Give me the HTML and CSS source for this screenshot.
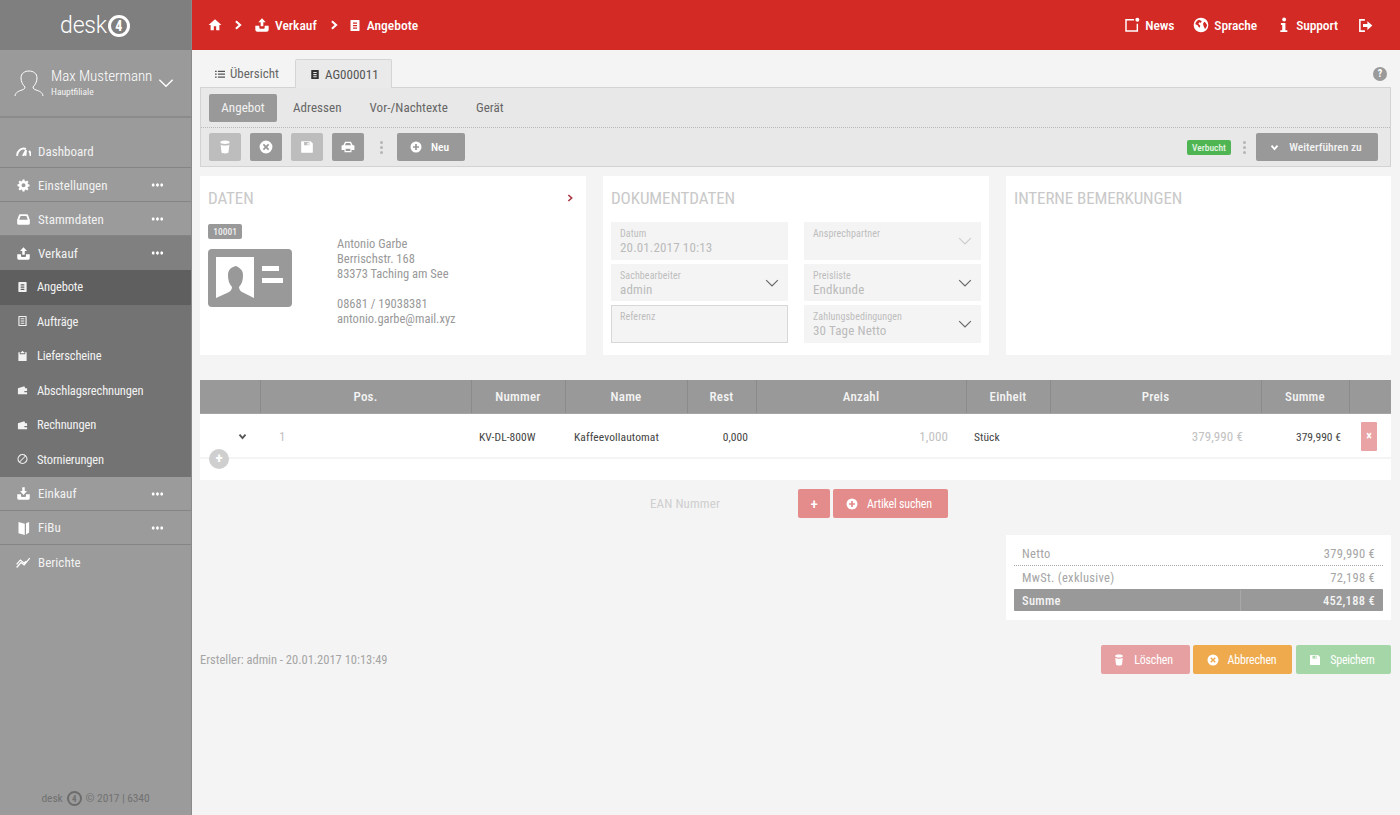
FILE: index.html
```html
<!DOCTYPE html>
<html lang="de">
<head>
<meta charset="utf-8">
<title>desk4 Angebote</title>
<link rel="stylesheet" href="styles.css">
</head>
<body>
<svg class="defs" width="0" height="0">
  <symbol id="i-upload" viewBox="0 0 24 24"><path d="M12 2l5.500 6H14v6h-4V8H6.500zM2 13h6v3a1.500 1.500 0 0 0 1.500 1.500h5A1.500 1.500 0 0 0 16 16v-3h6v6a3 3 0 0 1-3 3H5a3 3 0 0 1-3-3z"/></symbol>
  <symbol id="i-download" viewBox="0 0 24 24"><path d="M10 2h4v6h3.500L12 14.500 6.500 8H10zM2 13h6v3a1.500 1.500 0 0 0 1.500 1.500h5A1.500 1.500 0 0 0 16 16v-3h6v6a3 3 0 0 1-3 3H5a3 3 0 0 1-3-3z"/></symbol>
  <symbol id="i-doc" viewBox="0 0 24 24"><path fill-rule="evenodd" d="M4 1h16a1 1 0 0 1 1 1v20a1 1 0 0 1-1 1H4a1 1 0 0 1-1-1V2a1 1 0 0 1 1-1zm4 5v2.500h8V6zm0 5v2.500h8V11zm0 5v2.500h8V16z"/></symbol>
  <symbol id="i-trash" viewBox="0 0 24 24"><path d="M12 1c5 0 8 1.300 8 3s-3 3-8 3-8-1.300-8-3 3-3 8-3zM4.500 8c2 1 4.700 1.400 7.500 1.400s5.500-.4 7.500-1.400L18 21c-.2 1.400-3 2-6 2s-5.800-.6-6-2z"/></symbol>
  <symbol id="i-cancel" viewBox="0 0 24 24"><path fill-rule="evenodd" d="M12 1a11 11 0 1 1 0 22 11 11 0 0 1 0-22zM8.600 6.500L6.500 8.600 9.900 12l-3.400 3.400 2.100 2.100 3.400-3.400 3.400 3.400 2.100-2.100-3.400-3.400 3.400-3.400-2.100-2.100-3.400 3.400z"/></symbol>
  <symbol id="i-save" viewBox="0 0 24 24"><path fill-rule="evenodd" d="M3 2h15l4 4v15a1 1 0 0 1-1 1H3a1 1 0 0 1-1-1V3a1 1 0 0 1 1-1zm4 1.500V9h9V3.500zM12.500 4.500h2.500v3.500h-2.500z"/></symbol>
  <symbol id="i-print" viewBox="0 0 24 24"><path fill-rule="evenodd" d="M7 3h10l3 6h2a1 1 0 0 1 1 1v7h-5v4H6v-4H1v-7a1 1 0 0 1 1-1h2zm1.500 2L6.800 9h10.400l-1.700-4zM8 15v4h8v-4z"/></symbol>
  <symbol id="i-plus" viewBox="0 0 24 24"><path fill-rule="evenodd" d="M12 1a11 11 0 1 1 0 22 11 11 0 0 1 0-22zm-1.700 5v4.300H6v3.400h4.300V18h3.400v-4.300H18v-3.400h-4.300V6z"/></symbol>
  <symbol id="i-wallet" viewBox="0 0 24 24"><path fill-rule="evenodd" d="M2 8l14-4 2 4h4v13H2zm14 6v3h6v-3z"/></symbol>
  <symbol id="i-chev" viewBox="0 0 24 24"><path d="M2 7l10 10L22 7" fill="none" stroke="currentColor" stroke-width="2"/></symbol>
  <symbol id="i-chev-b" viewBox="0 0 24 24"><path d="M4 7l8 9 8-9" fill="none" stroke="currentColor" stroke-width="5"/></symbol>
  <symbol id="i-right" viewBox="0 0 24 24"><path d="M7 3l10 9-10 9" fill="none" stroke="currentColor" stroke-width="5"/></symbol>
</svg>

<aside class="sidebar">
  <div class="brand">
    <span class="brand-name">desk</span><span class="brand-mark">4</span>
  </div>
  <div class="user">
    <svg class="user-icon" viewBox="0 0 30 28"><path d="M1 26c.5-4 4-5 7-6 2-.7 3-1.500 3-3-2-2-4-5-4-9 0-4.500 3.500-7 8-7s8 2.500 8 7c0 4-2 7-4 9 0 1.500 1 2.300 3 3 3 1 6.500 2 7 6" fill="none" stroke="#fff" stroke-width="1"/></svg>
    <div class="user-text">
      <div class="user-name">Max Mustermann</div>
      <div class="user-sub">Hauptfiliale</div>
    </div>
    <svg class="user-chev"><use href="#i-chev"/></svg>
  </div>
  <nav class="nav">
    <a class="nav-item"><svg class="nav-ico" viewBox="0 0 24 24"><path d="M2 19a10.500 10.500 0 0 1 14-11M21 11a10 10 0 0 1 2 8M11 19l5-9-1 9" fill="none" stroke="#fff" stroke-width="3"/></svg><span>Dashboard</span></a>
    <a class="nav-item"><svg class="nav-ico" viewBox="-3 -3 30 30"><path fill-rule="evenodd" d="M10 1h4l.6 3 2 .9L19.200 3 22 5.800l-1.900 2.600.9 2 3 .6v4l-3 .6-.9 2 1.900 2.600-2.800 2.800-2.600-1.900-2 .9-.6 3h-4l-.6-3-2-.9-2.600 1.900L2 19.800l1.900-2.600-.9-2-3-.6v-4l3-.6.9-2L2 5.800 4.800 3l2.600 1.900 2-.9zM12 8.500a4 4 0 1 0 0 8 4 4 0 0 0 0-8z" transform="translate(0 -1)"/></svg><span>Einstellungen</span><i class="more"></i></a>
    <a class="nav-item"><svg class="nav-ico" viewBox="-1 -1 26 26"><path fill-rule="evenodd" d="M6 3h12c1 0 1.700.6 2 1.500L23 13v6a2 2 0 0 1-2 2H3a2 2 0 0 1-2-2v-6l3-8.500C4.300 3.600 5 3 6 3zM4.500 12.500h15L17 6H7z"/></svg><span>Stammdaten</span><i class="more"></i></a>
    <a class="nav-item nav-open"><svg class="nav-ico"><use href="#i-upload"/></svg><span>Verkauf</span><i class="more"></i></a>
    <div class="subnav">
      <a class="sub-item sub-active"><svg class="sub-ico"><use href="#i-doc"/></svg><span>Angebote</span></a>
      <a class="sub-item"><svg class="sub-ico" viewBox="0 0 24 24"><path fill-rule="evenodd" d="M4 1h16a1 1 0 0 1 1 1v20a1 1 0 0 1-1 1H4a1 1 0 0 1-1-1V2a1 1 0 0 1 1-1zm1.500 2.500v17h13v-17zM8 6h8v2H8zm0 5h8v2H8zm0 5h8v2H8z"/></svg><span>Aufträge</span></a>
      <a class="sub-item"><svg class="sub-ico" viewBox="0 0 24 24"><path d="M8 3h2a2 2 0 0 1 4 0h2v3H8zM3 4h3v4h12V4h3v19H3z"/></svg><span>Lieferscheine</span></a>
      <a class="sub-item"><svg class="sub-ico"><use href="#i-wallet"/></svg><span>Abschlagsrechnungen</span></a>
      <a class="sub-item"><svg class="sub-ico"><use href="#i-wallet"/></svg><span>Rechnungen</span></a>
      <a class="sub-item"><svg class="sub-ico" viewBox="0 0 24 24"><path fill-rule="evenodd" d="M12 1a11 11 0 1 1 0 22 11 11 0 0 1 0-22zm5.200 4.300A8.500 8.500 0 0 0 5.300 17.200zM18.700 6.800L6.800 18.700A8.500 8.500 0 0 0 18.700 6.800z"/></svg><span>Stornierungen</span></a>
    </div>
    <a class="nav-item"><svg class="nav-ico"><use href="#i-download"/></svg><span>Einkauf</span><i class="more"></i></a>
    <a class="nav-item"><svg class="nav-ico" viewBox="0 0 24 24"><path d="M4 3l10 3v18l-10-3zM16 5l5-2v17l-5 3z"/></svg><span>FiBu</span><i class="more"></i></a>
    <a class="nav-item nav-last"><svg class="nav-ico" viewBox="0 0 24 24"><path d="M1 20l7-8 5 4 9-11M1 15l6-7 6 5 3-3" fill="none" stroke="#fff" stroke-width="2"/></svg><span>Berichte</span></a>
  </nav>
  <div class="copyright"><span>desk</span><b class="mini-mark">4</b><span>© 2017 | 6340</span></div>
</aside>

<div class="main">
  <header class="topbar">
    <svg class="crumb-home" viewBox="0 0 24 24"><path d="M10 21v-7h4v7h5.500v-9H23L12 2 1 12h3.500v9z"/></svg>
    <svg class="crumb-sep"><use href="#i-right"/></svg>
    <svg class="crumb-ico"><use href="#i-upload"/></svg>
    <span class="crumb">Verkauf</span>
    <svg class="crumb-sep crumb-sep2"><use href="#i-right"/></svg>
    <svg class="crumb-ico crumb-doc"><use href="#i-doc"/></svg>
    <span class="crumb">Angebote</span>
    <div class="top-right">
      <a class="top-link"><svg class="top-ico" viewBox="0 0 24 24"><path d="M15 4H3v17h17V10" fill="none" stroke="#fff" stroke-width="2.200"/><circle cx="20" cy="4" r="3" fill="#fff"/></svg>News</a>
      <a class="top-link"><svg class="top-ico" viewBox="0 0 24 24"><path fill-rule="evenodd" d="M12 1a11 11 0 1 1 0 22 11 11 0 0 1 0-22zM9 4C6 5 3.500 8 3.500 11l3 1 2 3 1.500 1 1-3-3-3 2-2 2 1 1-3zm8 3l-2 3 1 4 2 4c2-2 3-4 3-6-1-2-2-4-4-5z"/></svg>Sprache</a>
      <a class="top-link"><svg class="top-ico top-info" viewBox="0 0 14 24"><circle cx="8" cy="3.500" r="3"/><path d="M3 9h7v11h3v3H2v-3h3v-8H3z"/></svg>Support</a>
      <a class="top-link top-exit"><svg class="top-ico" viewBox="0 0 24 24"><path d="M11 3H3v18h8" fill="none" stroke="#fff" stroke-width="2.500"/><path d="M8 9.500h7V5l8 7-8 7v-4.500H8z"/></svg></a>
    </div>
  </header>

  <div class="content">
    <div class="tabs">
      <a class="tab"><svg class="tab-ico" viewBox="0 0 12 12"><path d="M0 2h2v1.500H0zM3.500 2H12v1.500H3.500zM0 5.500h2V7H0zM3.500 5.500H12V7H3.500zM0 9h2v1.500H0zM3.500 9H12v1.500H3.500z" fill="#555"/></svg>Übersicht</a>
      <a class="tab tab-active"><svg class="tab-ico tab-doc"><use href="#i-doc"/></svg>AG000011</a>
      <span class="help">?</span>
    </div>

    <section class="panel">
      <div class="panel-row panel-tabs">
        <a class="ptab ptab-active">Angebot</a>
        <a class="ptab">Adressen</a>
        <a class="ptab">Vor-/Nachtexte</a>
        <a class="ptab">Gerät</a>
      </div>
      <div class="panel-row panel-tools">
        <button class="tool tool-off"><svg><use href="#i-trash"/></svg></button>
        <button class="tool"><svg><use href="#i-cancel"/></svg></button>
        <button class="tool tool-off"><svg><use href="#i-save"/></svg></button>
        <button class="tool"><svg><use href="#i-print"/></svg></button>
        <span class="vdots"><i></i><i></i><i></i></span>
        <button class="tool tool-text"><svg><use href="#i-plus"/></svg>Neu</button>
        <span class="spacer"></span>
        <span class="badge-green">Verbucht</span>
        <span class="vdots vdots-r"><i></i><i></i><i></i></span>
        <button class="tool tool-next"><svg><use href="#i-chev-b"/></svg>Weiterführen zu</button>
      </div>
    </section>

    <div class="cards">
      <section class="card">
        <div class="card-head"><h2>DATEN</h2><svg class="card-arrow"><use href="#i-right"/></svg></div>
        <div class="person">
          <div class="person-left">
            <span class="badge-grey">10001</span>
            <svg class="idcard" viewBox="0 0 84 58"><rect width="84" height="58" rx="4" fill="#999"/><path d="M8 8h38v41l-10-5c-3-1-5-3-5-6 3-3 4-7 4-12 0-5-3-7-7-9-5 1-8 4-8 9 0 5 1 9 4 12 0 3-2 5-5 6l-11 5z" fill="#fff"/><rect x="54" y="17" width="17" height="5" fill="#fff"/><rect x="54" y="29" width="21" height="5" fill="#fff"/></svg>
          </div>
          <div class="person-info">
            <p>Antonio Garbe<br>Berrischstr. 168<br>83373 Taching am See</p>
            <p>08681 / 19038381<br>antonio.garbe@mail.xyz</p>
          </div>
        </div>
      </section>
      <section class="card">
        <div class="card-head"><h2>DOKUMENTDATEN</h2></div>
        <div class="fields">
          <div class="field"><label>Datum</label><div>20.01.2017 10:13</div></div>
          <div class="field field-sel field-faint"><label>Ansprechpartner</label><div>&nbsp;</div><svg><use href="#i-chev"/></svg></div>
          <div class="field field-sel"><label>Sachbearbeiter</label><div>admin</div><svg><use href="#i-chev"/></svg></div>
          <div class="field field-sel"><label>Preisliste</label><div>Endkunde</div><svg><use href="#i-chev"/></svg></div>
          <div class="field field-box"><label>Referenz</label><div>&nbsp;</div></div>
          <div class="field field-sel"><label>Zahlungsbedingungen</label><div>30 Tage Netto</div><svg><use href="#i-chev"/></svg></div>
        </div>
      </section>
      <section class="card">
        <div class="card-head"><h2>INTERNE BEMERKUNGEN</h2></div>
      </section>
    </div>

    <section class="table-wrap">
      <table class="items">
        <colgroup><col class="c1"><col class="c2"><col class="c3"><col class="c4"><col class="c5"><col class="c6"><col class="c7"><col class="c8"><col class="c9"><col class="c10"></colgroup>
        <thead>
          <tr><th></th><th>Pos.</th><th>Nummer</th><th>Name</th><th>Rest</th><th>Anzahl</th><th>Einheit</th><th>Preis</th><th>Summe</th><th></th></tr>
        </thead>
        <tbody>
          <tr>
            <td class="t-chev"><svg><use href="#i-chev-b"/></svg></td>
            <td class="t-faint t-pos">1</td>
            <td>KV-DL-800W</td>
            <td class="t-name">Kaffeevollautomat</td>
            <td class="t-right">0,000</td>
            <td class="t-right t-faint t-price">1,000</td>
            <td>Stück</td>
            <td class="t-right t-faint t-price">379,990 €</td>
            <td class="t-right">379,990 €</td>
            <td class="t-del"><span class="del">×</span></td>
          </tr>
        </tbody>
      </table>
      <div class="table-foot"><span class="add-row">+</span></div>
    </section>

    <div class="ean-row">
      <span class="ean-label">EAN Nummer</span>
      <button class="btn btn-pink btn-square">+</button>
      <button class="btn btn-pink btn-search"><svg><use href="#i-plus"/></svg>Artikel suchen</button>
    </div>

    <div class="totals-row">
      <section class="totals">
        <div class="tot tot-dotted"><span>Netto</span><span>379,990 €</span></div>
        <div class="tot tot-mid"><span>MwSt. (exklusive)</span><span>72,198 €</span></div>
        <div class="tot tot-sum"><span class="sum-l">Summe</span><span class="sum-r">452,188 €</span></div>
      </section>
    </div>

    <div class="actions">
      <span class="creator">Ersteller: admin - 20.01.2017 10:13:49</span>
      <button class="btn btn-red"><svg><use href="#i-trash"/></svg>Löschen</button>
      <button class="btn btn-orange"><svg><use href="#i-cancel"/></svg>Abbrechen</button>
      <button class="btn btn-green"><svg><use href="#i-save"/></svg>Speichern</button>
    </div>
  </div>
</div>
</body>
</html>
```

FILE: styles.css
```css
* { box-sizing: border-box; }
html, body { margin: 0; height: 100%; }
body {
  display: flex;
  width: 1400px;
  height: 815px;
  overflow: hidden;
  font-family: Roboto, "Liberation Sans", sans-serif;
  font-stretch: 85%;
  font-size: 12px;
  color: #555;
  background: #f4f4f4;
}
.defs { position: absolute; }
svg { fill: currentColor; }
button { font-family: inherit; font-stretch: inherit; border: 0; padding: 0; cursor: pointer; }

/* sidebar */
.sidebar {
  width: 192px;
  flex: none;
  display: flex;
  flex-direction: column;
  background: #9b9b9b;
  border-right: 1px solid #8a8a8a;
  color: #f4f4f4;
}
.brand {
  height: 50px;
  background: #7f7f7f;
  display: flex;
  align-items: center;
  justify-content: center;
  padding-right: 1px;
}
.brand-name { font-size: 23px; font-weight: 300; font-stretch: 100%; color: #fff; letter-spacing: -.2px; }
.brand-mark {
  width: 22px;
  height: 22px;
  margin: 1px 0 0 1px;
  border-radius: 50%;
  border: 3px solid #fff;
  display: flex;
  align-items: center;
  justify-content: center;
  font-size: 14px;
  font-weight: 700;
  color: #fff;
}
.user {
  height: 68px;
  display: flex;
  align-items: center;
  padding-left: 14px;
  border-bottom: 2px solid #8b8b8b;
  background: #9a9a9a;
}
.user-icon { width: 30px; height: 28px; margin: 2px 7px 0 0; flex: none; }
.user-text { flex: none; width: 108px; }
.user-name { font-size: 15px; font-weight: 300; color: #fff; line-height: 17px; letter-spacing: -.05px; white-space: nowrap; }
.user-sub { font-size: 9.500px; line-height: 13px; color: #f4f4f4; }
.user-chev { width: 16px; height: 16px; color: #fff; margin-left: -1px; }
.nav { padding-top: 16px; display: flex; flex-direction: column; }
.nav-item {
  height: 34px;
  display: flex;
  align-items: center;
  padding-left: 16px;
  padding-top: 1px;
  font-size: 13px;
  letter-spacing: .05px;
  color: #f2f2f2;
  border-bottom: 1px solid #858585;
  position: relative;
}
.subnav ~ .nav-item { padding-top: 0; }
.subnav ~ .nav-last { padding-top: 1px; border-bottom: 0; }
.nav-open { background: #808080; border-bottom: 0; }
.nav-ico { width: 15px; height: 15px; margin-right: 7px; flex: none; color: #fff; fill: #fff; }
.more {
  position: absolute;
  left: 151px;
  top: 15px;
  width: 13px;
  height: 4px;
  background: radial-gradient(circle, #fff 1.400px, transparent 1.800px) 0 0 / 4.300px 4px repeat-x;
}
.subnav { display: flex; flex-direction: column; background: #737373; height: 207px; }
.sub-item {
  height: 34.500px;
  display: flex;
  align-items: center;
  padding-left: 17px;
  padding-bottom: 1px;
  font-size: 12.500px;
  letter-spacing: -.15px;
  color: #f2f2f2;
}
.sub-active { background: #5f5f5f; }
.sub-ico { width: 11px; height: 12px; margin-right: 9px; flex: none; fill: #f2f2f2; }
.copyright {
  margin-top: auto;
  height: 24px;
  display: flex;
  align-items: flex-start;
  justify-content: center;
  gap: 4px;
  font-size: 11.500px;
  color: #717171;
  letter-spacing: -.1px;
}
.mini-mark {
  width: 15px;
  height: 15px;
  border-radius: 50%;
  border: 2px solid #6c6c6c;
  font-size: 9px;
  display: flex;
  align-items: center;
  justify-content: center;
}

/* main */
.main { flex: 1; display: flex; flex-direction: column; min-width: 0; }
.topbar {
  height: 50px;
  flex: none;
  background: #d32a26;
  color: #fff;
  display: flex;
  align-items: center;
  padding: 0 27px 0 16px;
  font-size: 13.500px;
  font-weight: 500;
}
.crumb-home { width: 14px; height: 14px; fill: #fff; margin-right: 11px; }
.crumb-sep { width: 10px; height: 10px; color: #fff; margin-right: 11px; }
.crumb-sep2 { margin: 0 10px 0 12px; }
.crumb-ico { width: 16px; height: 16px; fill: #fff; margin-right: 5px; }
.crumb-doc { width: 12px; height: 13px; margin-right: 6px; }
.top-right { margin-left: auto; display: flex; align-items: center; gap: 19px; letter-spacing: -.1px; }
.top-link { display: flex; align-items: center; gap: 5px; }
.top-ico { width: 16px; height: 16px; fill: #fff; }
.top-info { width: 9px; margin: 0 3px 0 3px; height: 16px; }
.top-exit { margin-left: 1px; }
.top-exit .top-ico { width: 15px; height: 15px; }

.content { flex: 1; padding: 9px 9px 0 8px; }
.tabs {
  height: 28px;
  display: flex;
  align-items: flex-start;
  position: relative;
}
.tab {
  width: 95px;
  height: 28px;
  display: flex;
  align-items: center;
  padding: 1px 0 0 15px;
  font-size: 13px;
  color: #666;
}
.tab-active {
  width: 97px;
  height: 29px;
  padding: 0 0 0 14px;
  background: #eaeaea;
  border: 1px solid #d5d5d5;
  border-bottom: 0;
  border-radius: 2px 2px 0 0;
  color: #555;
  position: relative;
  z-index: 1;
}
.tab-ico { width: 10px; height: 10px; margin-right: 5px; }
.tab-doc { height: 13px; fill: #333; }
.help {
  position: absolute;
  right: 4px;
  top: 8px;
  width: 14px;
  height: 14px;
  border-radius: 50%;
  background: #9a9a9a;
  color: #fff;
  font-size: 10px;
  font-weight: 700;
  text-align: center;
  line-height: 14px;
}
.panel { height: 80px; background: #e8e8e8; border: 1px solid #d3d3d3; }
.panel-row { display: flex; align-items: center; padding: 0 12px 0 8px; }
.panel-tabs { height: 40px; border-bottom: 1px dotted #b8b8b8; }
.panel-tools { height: 38px; }
.ptab {
  height: 28px;
  display: flex;
  align-items: center;
  padding: 0 14px;
  font-size: 13px;
  letter-spacing: .05px;
  color: #666;
  border-radius: 2px;
}
.ptab-active { background: #999; color: #f2f2f2; width: 68px; padding: 0; justify-content: center; margin-right: 2px; }
.tool {
  width: 32px;
  height: 28px;
  margin-right: 9px;
  background: #999;
  border-radius: 2px;
  color: #fff;
  display: flex;
  align-items: center;
  justify-content: center;
}
.tool svg { width: 14px; height: 14px; fill: #fff; color: #fff; }
.tool-off { background: #bdbdbd; }
.tool-text { width: 68px; margin: 0; gap: 9px; font-size: 11.500px; font-weight: 500; padding-right: 3px; }
.tool-text svg { width: 12px; height: 12px; }
.tool-next { width: 122px; margin: 0; gap: 10px; font-size: 11.500px; font-weight: 500; padding-right: 2px; color: #f4f4f4; }
.tool-next svg { width: 9px; height: 9px; }
.spacer { flex: 1; }
.vdots { display: flex; flex-direction: column; gap: 2px; margin: 0 14px 0 7px; }
.vdots i { width: 3px; height: 3px; border-radius: 50%; background: #b5b5b5; }
.vdots-r { margin: 0 10px 0 12px; }
.badge-green {
  width: 44px;
  height: 15px;
  background: #4fb553;
  color: #e3f4e3;
  border-radius: 2px;
  font-size: 9.500px;
  font-weight: 500;
  text-align: center;
  line-height: 15px;
}

/* cards */
.cards { display: grid; grid-template-columns: 386px 386px 385px; gap: 17px; margin-top: 9px; }
.card { height: 179px; background: #fff; padding: 13px 8px 0 8px; }
.card-head { display: flex; justify-content: space-between; align-items: center; height: 18px; }
.card-head h2 {
  margin: 0;
  font-size: 17px;
  font-weight: 400;
  letter-spacing: -.1px;
  color: #c9c9c9;
}
.card-arrow { width: 8px; height: 8px; color: #a83a45; margin-right: 4px; }
.person { display: flex; margin-top: 17px; }
.person-left { width: 129px; flex: none; display: flex; flex-direction: column; align-items: flex-start; }
.badge-grey {
  width: 34px;
  height: 15px;
  background: #999;
  border-radius: 2px;
  color: #eee;
  font-size: 9.500px;
  font-weight: 500;
  text-align: center;
  line-height: 15px;
  margin-bottom: 10px;
}
.idcard { width: 84px; height: 58px; }
.person-info { padding-top: 12px; font-size: 12.500px; line-height: 15px; color: #999; }
.person-info p { margin: 0 0 15px; }
.fields { display: grid; grid-template-columns: 177px 177px; column-gap: 16px; row-gap: 4px; margin-top: 15px; }
.field {
  height: 37.500px;
  background: #f4f4f4;
  padding: 6px 9px 0;
  position: relative;
  color: #bbb;
  font-size: 13px;
  letter-spacing: .15px;
  line-height: 16px;
}
.field label { display: block; font-size: 10px; line-height: 11px; margin-bottom: 1px; letter-spacing: .1px; color: #bdbdbd; }
.field svg { position: absolute; right: 9px; top: 12px; width: 14px; height: 14px; color: #666; }
.field-faint svg { color: #ccc; }
.field-box { border: 1px solid #d8d8d8; padding: 5px 8px 0; }

/* table */
.table-wrap { margin-top: 25px; width: 1191px; }
.items { width: 1191px; border-collapse: collapse; table-layout: fixed; background: #fff; }
.c1 { width: 60px; } .c2 { width: 211px; } .c3 { width: 94px; } .c4 { width: 122px; } .c5 { width: 69px; }
.c6 { width: 210px; } .c7 { width: 84px; } .c8 { width: 211px; } .c9 { width: 88px; } .c10 { width: 42px; }
.items th {
  height: 33px;
  background: #999;
  color: #f4f4f4;
  font-size: 13px;
  font-weight: 500;
  letter-spacing: .2px;
  border-left: 1px solid #8b8b8b;
  border-bottom: 1px solid #a5a5a5;
  padding: 0;
}
.items th:first-child { border-left: 0; }
.items td {
  height: 45px;
  padding: 3px 8px 0;
  font-size: 11.500px;
  font-weight: 400;
  letter-spacing: .05px;
  color: #444;
  white-space: nowrap;
  border-bottom: 2px solid #f4f4f4;
  overflow: hidden;
}
.items .t-name { padding-left: 9px; letter-spacing: .1px; }
.items .t-faint { color: #c2c2c2; font-size: 13px; font-weight: 400; letter-spacing: .1px; }
.t-right { text-align: right; }
.items .t-pos { padding-left: 19px; }
.items .t-price { padding-right: 18px; }
.items .t-chev { padding: 3px 0 0 38px; }
.t-chev svg { width: 9px; height: 9px; color: #555; display: block; }
.items .t-del { padding: 2px 0 0 12px; overflow: visible; }
.del {
  display: block;
  width: 16px;
  height: 29px;
  background: #e9a3a5;
  color: #fff;
  border-radius: 1px;
  text-align: center;
  line-height: 29px;
  font-size: 12px;
  font-weight: 700;
}
.table-foot { height: 21px; background: #fff; position: relative; }
.add-row {
  position: absolute;
  left: 9px;
  top: -10px;
  width: 20px;
  height: 20px;
  border-radius: 50%;
  background: #cfcfcf;
  color: #fff;
  text-align: center;
  line-height: 19px;
  font-size: 15px;
  font-weight: 700;
}
.ean-row { display: flex; align-items: center; margin-top: 9px; padding-left: 450px; }
.ean-label { width: 148px; font-size: 13px; letter-spacing: .1px; color: #cfcfcf; }
.btn {
  height: 29px;
  border-radius: 2px;
  color: #fff;
  display: flex;
  align-items: center;
  justify-content: center;
  font-size: 12px;
  font-weight: 400;
  letter-spacing: -.2px;
}
.btn svg { width: 12px; height: 12px; fill: #fff; color: #fff; margin-right: 9px; }
.btn-pink { background: #e48b8b; }
.btn-square { width: 32px; font-size: 15px; font-weight: 500; margin-right: 3px; }
.btn-search { width: 115px; padding-right: 3px; }
.totals-row { display: flex; justify-content: flex-end; margin-top: 17px; }
.totals { width: 385px; height: 85px; background: #fff; padding: 7px 8px 0; }
.tot {
  display: flex;
  justify-content: space-between;
  height: 24px;
  align-items: center;
  padding: 0 8px;
  font-size: 12.500px;
  letter-spacing: .3px;
  color: #a5a5a5;
}
.tot-mid { height: 23px; }
.tot-sum { height: 22px; background: #999; color: #f4f4f4; padding: 1px 0 0; border-radius: 1px; font-weight: 500; }
.tot-dotted { border-bottom: 1px dotted #aaa; }
.sum-l { width: 227px; padding-left: 8px; line-height: 21px; border-right: 1px solid #a8a8a8; }
.sum-r { padding-right: 8px; }
.actions { display: flex; align-items: center; margin-top: 25px; }
.creator { margin-right: auto; font-size: 12.500px; color: #a5a5a5; }
.btn-red { width: 89px; background: #e7a0a2; margin-right: 3px; padding-right: 5px; }
.btn-orange { width: 99px; background: #efaa4d; margin-right: 4px; padding-right: 2px; }
.btn-green { width: 95px; background: #a5d6a7; padding-right: 3px; letter-spacing: -.3px; }
```
